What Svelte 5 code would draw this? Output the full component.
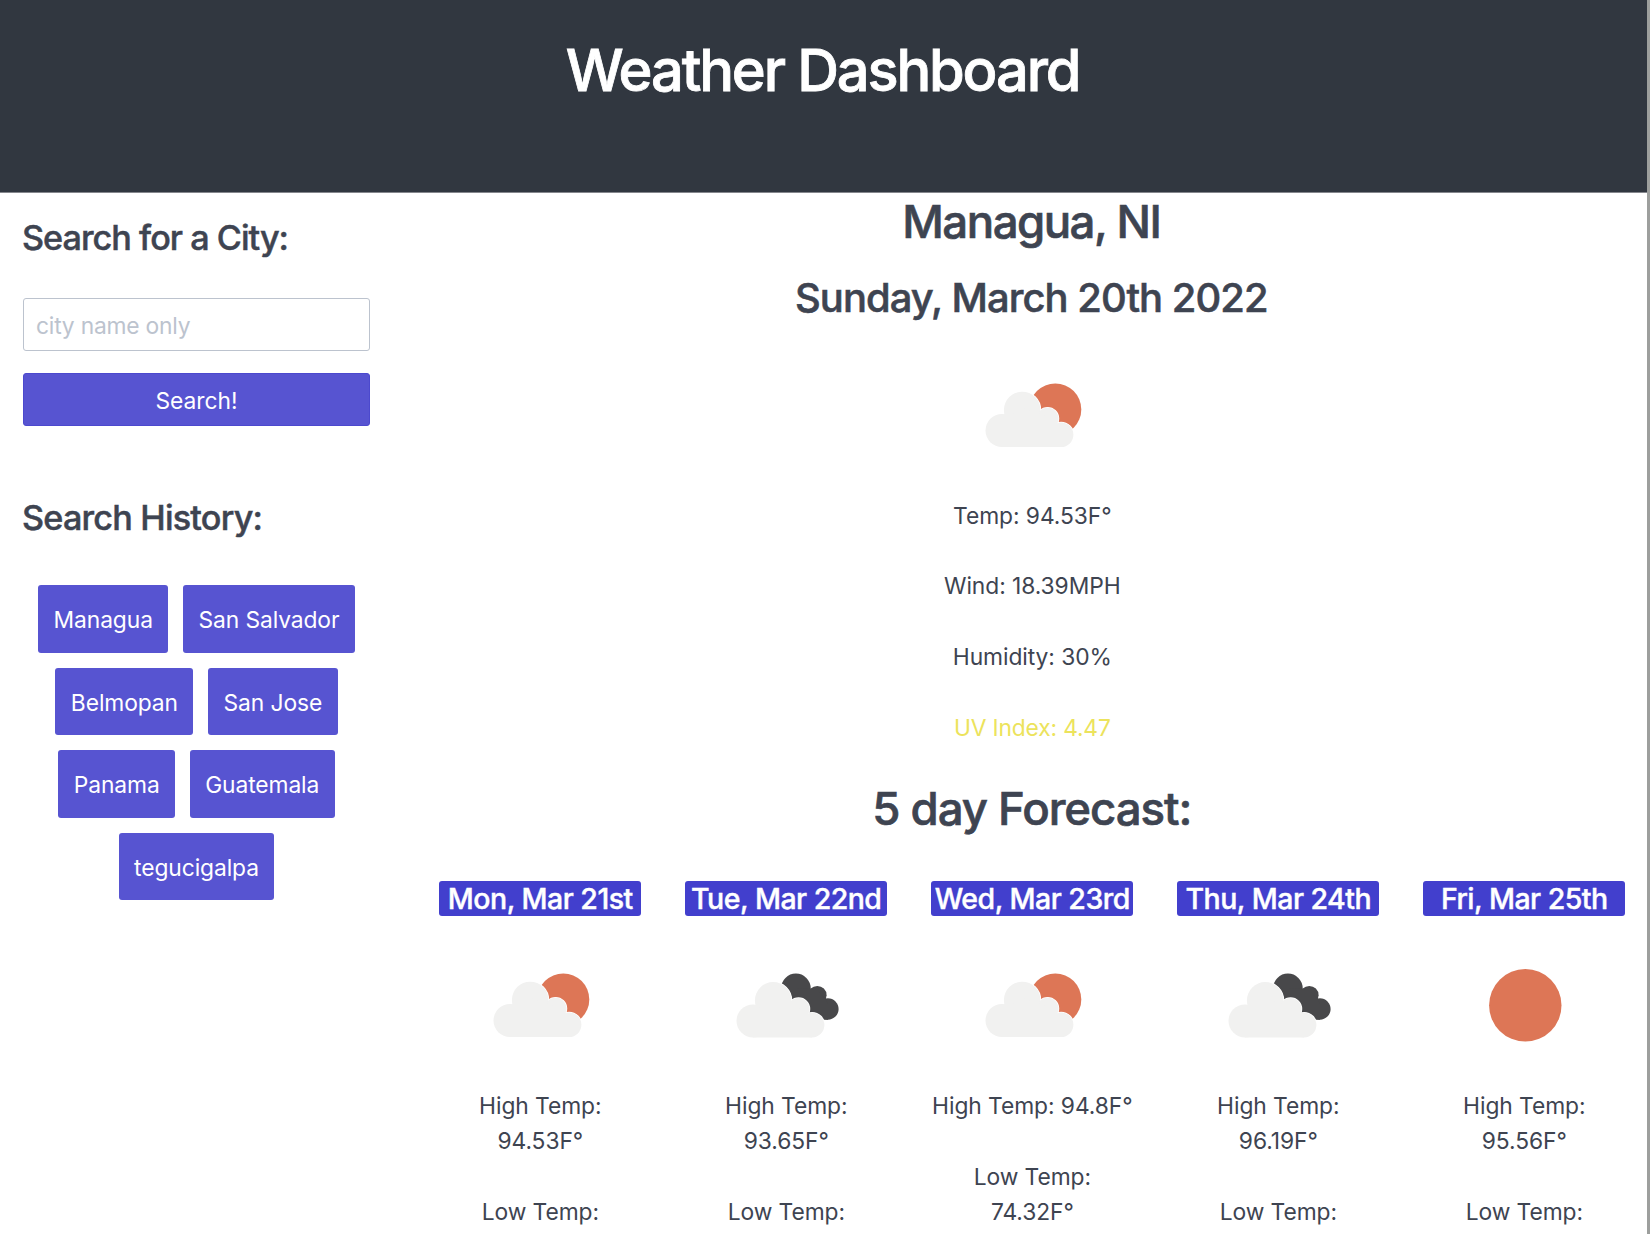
<script>
  const history = ['Managua', 'San Salvador', 'Belmopan', 'San Jose', 'Panama', 'Guatemala', 'tegucigalpa'];
  const current = ['Temp: 94.53F°', 'Wind: 18.39MPH', 'Humidity: 30%'];
  const days = [
    { date: 'Mon, Mar 21st', icon: 'sun-cloud', high: '94.53F°', low: '' },
    { date: 'Tue, Mar 22nd', icon: 'clouds', high: '93.65F°', low: '' },
    { date: 'Wed, Mar 23rd', icon: 'sun-cloud', high: '94.8F°', low: '74.32F°' },
    { date: 'Thu, Mar 24th', icon: 'clouds', high: '96.19F°', low: '' },
    { date: 'Fri, Mar 25th', icon: 'sun', high: '95.56F°', low: '' }
  ];
</script>

{#snippet cloud()}
  <g class="cloud">
    <circle cx="43" cy="88.5" r="16.5" />
    <circle cx="63.2" cy="68" r="18.3" />
    <circle cx="88.6" cy="76.6" r="10.9" />
    <circle cx="102.1" cy="92.7" r="12.3" />
    <path d="M43 105V80L63 66L88 74L102 90V105Z" />
  </g>
{/snippet}

{#snippet weatherIcon(kind)}
  <svg class="icon" viewBox="0 0 147 147" aria-hidden="true">
    {#if kind === 'sun'}
      <circle class="sun" cx="74.3" cy="73.3" r="36.2" />
    {:else if kind === 'sun-cloud'}
      <circle class="sun" cx="96.3" cy="67.4" r="26" />
      <g class="halo">{@render cloud()}</g>
      {@render cloud()}
    {:else}
      <g class="dark">
        <circle cx="82.9" cy="56.4" r="14.8" />
        <circle cx="104.3" cy="63.2" r="9.3" />
        <circle cx="114.9" cy="77" r="10.7" />
        <path d="M83 56L96.5 56.5L104 58L113.3 67.5L115 72V87.7H105L83 76Z" />
      </g>
      <g transform="translate(-3 0.4)">
        <g class="halo">{@render cloud()}</g>
        {@render cloud()}
      </g>
    {/if}
  </svg>
{/snippet}

<div class="page">
  <header><h1>Weather Dashboard</h1></header>
  <div class="body">
    <aside>
      <h3>Search for a City:</h3>
      <input type="text" placeholder="city name only" />
      <button class="search">Search!</button>
      <h3 class="history-title">Search History:</h3>
      <div class="tags">
        {#each history as city}
          <button class="tag">{city}</button>
        {/each}
      </div>
    </aside>
    <main>
      <h2 class="city">Managua, NI</h2>
      <h2 class="date">Sunday, March 20th 2022</h2>
      {@render weatherIcon('sun-cloud')}
      <div class="stats">
        {#each current as line}
          <p>{line}</p>
        {/each}
        <p class="uv">UV Index: 4.47</p>
      </div>
      <h2 class="forecast-title">5 day Forecast:</h2>
      <div class="days">
        {#each days as day}
          <section>
            <h4>{day.date}</h4>
            {@render weatherIcon(day.icon)}
            <div class="stats">
              <p>High Temp: {day.high}</p>
              <p>Low Temp: {day.low}</p>
            </div>
          </section>
        {/each}
      </div>
    </main>
  </div>
</div>

<style>
  :global(body) {
    margin: 0;
    background: #fff;
    overflow: hidden;
  }
  .page {
    box-sizing: border-box;
    height: 1234px;
    overflow: hidden;
    border-right: 3px solid #9d9f9d;
    font-family: Inter, 'Liberation Sans', sans-serif;
    font-size: 22.8px;
    line-height: 35.3px;
    letter-spacing: -0.003em;
    color: #3e4451;
  }
  h1, h2, h3, h4, p { margin: 0; }
  h1, h2, h3, h4 {
    font-weight: 500;
    -webkit-text-stroke: 0.014em currentColor;
  }
  header {
    box-sizing: border-box;
    height: 192px;
    padding: 34px 2px 0 0;
    background: #313740;
    box-shadow: 0 1px 0 #85878d;
    color: #fff;
    text-align: center;
  }
  h1 {
    font-size: 57.8px;
    line-height: 72px;
    letter-spacing: -0.037em;
  }
  .body {
    display: grid;
    grid-template-columns: 347px 1230px;
    column-gap: 47.3px;
    padding-left: 23px;
  }
  aside {
    padding-top: 25px;
    display: flex;
    flex-direction: column;
  }
  h3 {
    font-size: 34.2px;
    line-height: 42px;
    letter-spacing: -0.0285em;
    margin-left: -1px;
  }
  input {
    box-sizing: border-box;
    width: 347px;
    height: 53px;
    margin-top: 39px;
    padding: 1.5px 12px 0;
    border: 1.5px solid #bcc3ce;
    border-radius: 3px;
    font: inherit;
    letter-spacing: -0.009em;
    background: #fff;
  }
  input::placeholder { color: #bcc3ce; opacity: 1; }
  button {
    border: 0;
    font: inherit;
    color: #fff;
    background: #5754d1;
    border-radius: 3px;
    white-space: nowrap;
  }
  .search {
    height: 53px;
    margin-top: 22px;
    padding: 2px 0 0;
    border: 1px solid #4c49ce;
  }
  .history-title { margin-top: 70.5px; letter-spacing: -0.0235em; }
  .tags {
    display: flex;
    flex-wrap: wrap;
    justify-content: center;
    gap: 14.8px;
    margin-top: 46.8px;
  }
  .tag {
    height: 67.7px;
    padding: 1.5px 15.4px 0;
    letter-spacing: -0.004em;
  }
  main { text-align: center; }
  .city, .forecast-title { font-size: 45.6px; line-height: 56px; }
  .city { margin: 2px 2px 0 0; letter-spacing: -0.0335em; }
  .date {
    margin: 23px 2px 0 0;
    font-size: 39.9px;
    line-height: 49px;
    letter-spacing: -0.0235em;
  }
  .icon { display: block; width: 147px; height: 147px; margin: 20px auto 0; }
  .stats { margin-top: 8.5px; }
  .stats p { margin-bottom: 35.6px; }
  .uv { color: #ece35c; letter-spacing: -0.007em; }
  .forecast-title { margin: 0 1px 0 0; letter-spacing: -0.0235em; }
  .days {
    display: grid;
    grid-template-columns: repeat(5, 1fr);
    margin-top: 43.8px;
  }
  section { padding: 0 22px; }
  section .icon { margin-top: 15.8px; }
  section .stats p { margin-bottom: 35.6px; }
  h4 {
    height: 35.5px;
    border-radius: 3px;
    background: #423fcd;
    color: #fff;
    font-size: 28.5px;
    letter-spacing: -0.018em;
    white-space: nowrap;
  }
  .sun { fill: #dd7656; }
  .dark { fill: #48484a; }
  .cloud { fill: #f1f1f0; }
  .halo .cloud { fill: #fff; stroke: #fff; stroke-width: 1.5; }
</style>
